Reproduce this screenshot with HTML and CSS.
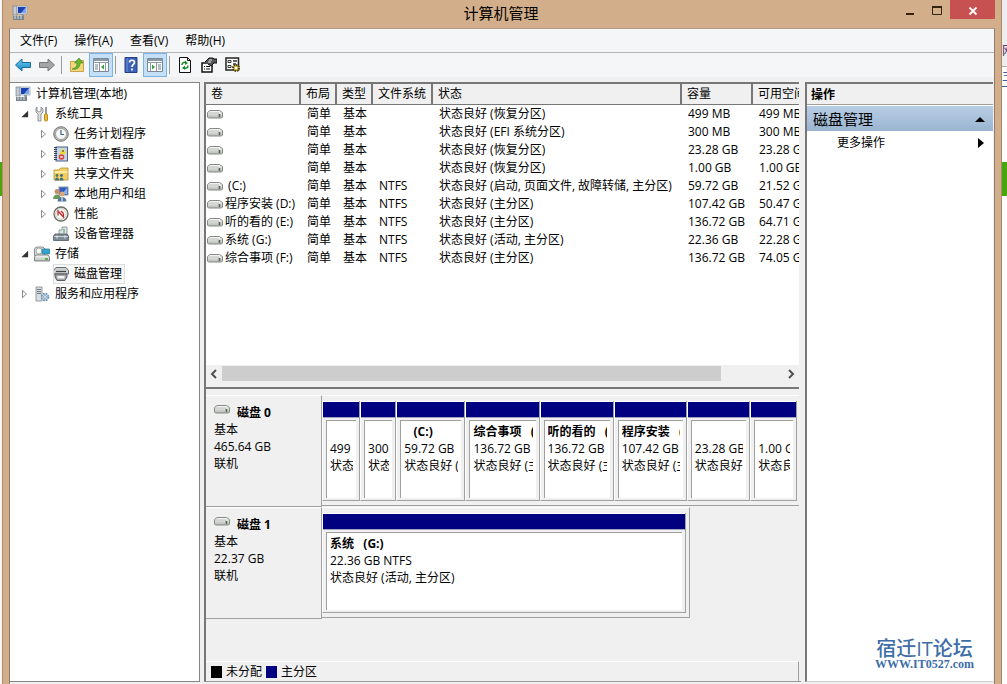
FILE: index.html
```html
<!DOCTYPE html>
<html lang="zh-CN">
    <head>
        <meta charset="UTF-8" />
        <meta name="viewport" content="width=device-width" />
        <title>计算机管理</title>
        <link rel="stylesheet" href="styles.css">
    </head>
    <body>
        <!-- Shared icons -->
        <svg class="defs" aria-hidden="true">
            <defs>
                <linearGradient id="g-blue" x1="0" y1="0" x2="0" y2="1">
                    <stop offset="0" stop-color="#6fd0f2" />
                    <stop offset="1" stop-color="#1583c0" />
                </linearGradient>
                <linearGradient id="g-grey" x1="0" y1="0" x2="0" y2="1">
                    <stop offset="0" stop-color="#fbfbfb" />
                    <stop offset="1" stop-color="#b4b8b4" />
                </linearGradient>
                <symbol id="i-computer" viewBox="0 0 16 16">
                    <rect x="1" y="1" width="4" height="9" fill="#c3cad0" stroke="#7b858d" stroke-width=".7" />
                    <rect x="5" y="1" width="10" height="8" fill="#e4e8ec" stroke="#8b98a5" stroke-width=".7" />
                    <rect x="6" y="2" width="8" height="6" fill="#1c3fb4" />
                    <path d="M9 8 14 2v6z" fill="#7ea6ee" />
                    <path d="M9 9h3v2H9z" fill="#8c98a1" />
                    <path d="M1 11h11v4H1z" fill="#77848c" />
                    <path d="M2 11h9M2 13h9" stroke="#dde2e5" stroke-dasharray="2 1" />
                </symbol>
                <symbol id="i-drive" viewBox="0 0 16 10">
                    <path d="M3 1.500h9.500L15.500 3.500v4.500l-1 1H1.500l-1-1V3.500z" fill="url(#g-grey)" stroke="#858a85" />
                    <path d="M1.500 4h10v4" fill="none" stroke="#c3c7c3" />
                    <path d="M12.500 5v3" stroke="#51614c" stroke-width="1.500" />
                </symbol>
                <symbol id="i-tools" viewBox="0 0 16 16">
                    <path d="M3 1v4l2 1 2-1V1l2 2v3L7 8v7H4V8L2 6V2z" fill="#dde0e2" stroke="#7b7f83" stroke-width=".8" />
                    <path d="M12 1v7" stroke="#777" stroke-width="1.500" />
                    <rect x="10.500" y="8" width="3" height="7" rx="1" fill="#f1bd27" stroke="#a87b12" stroke-width=".8" />
                </symbol>
                <symbol id="i-clock" viewBox="0 0 16 16">
                    <circle cx="8" cy="8" r="7.300" fill="#b8b8b5" stroke="#767674" />
                    <circle cx="8" cy="8" r="5.500" fill="#f3f7fb" stroke="#8e8c7a" stroke-width=".7" />
                    <path d="M8 4v4.500h3" fill="none" stroke="#45617f" stroke-width="1.200" />
                </symbol>
                <symbol id="i-events" viewBox="0 0 16 16">
                    <rect x="3" y="1" width="11.500" height="14" fill="#c5d6ea" stroke="#49617f" />
                    <path d="M2.500 1v14" stroke="#38435b" stroke-width="3" stroke-dasharray="1 1" />
                    <path d="M10 2 13.500 8h-7z" fill="#f5d92d" />
                    <path d="M10 4v2" stroke="#333" />
                    <circle cx="8.500" cy="11" r="2.800" fill="#d8433c" />
                    <path d="M7.500 10l2 2m0-2-2 2" stroke="#fff" />
                </symbol>
                <symbol id="i-shared" viewBox="0 0 16 16">
                    <path d="M1 4h5l1.500-2H15v12H1z" fill="#f3cf62" stroke="#b68d27" stroke-width=".8" />
                    <path d="M1.500 5h13v2h-13z" fill="#fae9a3" />
                    <circle cx="4" cy="9.500" r="1.400" fill="#4a7f5a" />
                    <circle cx="8.500" cy="9.500" r="1.400" fill="#3c628c" />
                    <path d="M2 14.500c0-4 4-4 4 0zM6.500 14.500c0-4 4-4 4 0z" fill="#3e7286" />
                </symbol>
                <symbol id="i-users" viewBox="0 0 16 16">
                    <rect x="6" y="1" width="9" height="8" fill="#345bc0" stroke="#8b98a5" />
                    <path d="M9 8l5-6v6z" fill="#8eb0ec" />
                    <circle cx="4" cy="5.500" r="2.500" fill="#c78f68" />
                    <path d="M0 13c0-6 8-6 8 0z" fill="#69995d" />
                    <circle cx="9" cy="8" r="2.500" fill="#dca67b" />
                    <path d="M4.500 15.500c0-6 9-6 9 0z" fill="#52769f" />
                    <path d="M9 11v4" stroke="#fff" />
                </symbol>
                <symbol id="i-perf" viewBox="0 0 16 16">
                    <circle cx="8" cy="8" r="7" fill="#f8f8f6" stroke="#6c6c66" stroke-width="1.300" />
                    <circle cx="8" cy="8" r="5.300" fill="none" stroke="#c2c2ba" stroke-width=".8" />
                    <path d="M5 9.500V5l5.500 6V7.500M8 5l2.500 2.500" fill="none" stroke="#c22b2b" stroke-width="1.300" />
                </symbol>
                <symbol id="i-device" viewBox="0 0 16 16">
                    <path d="M6 8V4h3V1h5v7" fill="#dfe4e7" stroke="#7e8990" stroke-width=".8" />
                    <path d="M11 3v4" stroke="#51b65d" stroke-width="1.200" />
                    <path d="M2 8h12l1.500 2v4.500H.500V10z" fill="#7d8b95" stroke="#4c5963" stroke-width=".8" />
                    <path d="M1 10.500h14" stroke="#c9d0d5" />
                    <path d="M4 9.500v3m8-3v3" stroke="#eee" />
                </symbol>
                <symbol id="i-storage" viewBox="0 0 16 16">
                    <path d="M2 1h7l2 2v7H.500V3z" fill="#d6dad9" stroke="#7a807d" stroke-width=".8" />
                    <circle cx="5" cy="5" r="3" fill="#f5f6f6" stroke="#8a918e" stroke-width=".7" />
                    <rect x="8" y="3" width="8" height="5" rx="1" fill="#33a6d0" stroke="#2c7391" stroke-width=".7" />
                    <path d="M2 9h12l1.500 2v4H.500v-4z" fill="url(#g-grey)" stroke="#686e6a" stroke-width=".8" />
                    <path d="M11 13h3" stroke="#3e9f3a" stroke-width="1.500" />
                </symbol>
                <symbol id="i-disk" viewBox="0 0 16 16">
                    <path d="M3 1.500h10l2.500 3V8H.500V4.500z" fill="#c9cdcf" stroke="#5c6164" stroke-width=".9" />
                    <path d="M3 5.500h10" stroke="#444" stroke-width="1.200" />
                    <path d="M2 8h12v3l-2 3.500H4L2 11z" fill="#a0a4a7" stroke="#4e5356" stroke-width=".9" />
                    <path d="M4.500 10h7v2.500h-7z" fill="#f3f4f4" />
                </symbol>
                <symbol id="i-services" viewBox="0 0 16 16">
                    <path d="M2 1h6v14H2z" fill="#d9dee1" stroke="#7d878e" stroke-width=".8" />
                    <path d="M3 3.500h4m-4 2h4m-4 2h4" stroke="#6d7a83" />
                    <circle cx="11" cy="11" r="3.400" fill="#c6dcec" stroke="#6f95b4" stroke-width="1.800" stroke-dasharray="1.700 1" />
                    <circle cx="11" cy="11" r="1.400" fill="#fff" stroke="#6f95b4" stroke-width=".8" />
                </symbol>
            </defs>
        </svg>

        <div class="backdrop backdrop-left"><i class="green"></i></div>

        <div class="window">
            <header class="titlebar">
                <svg class="icon app-icon"><use href="#i-computer" /></svg>
                <h1>计算机管理</h1>
                <div class="controls">
                    <button class="control" aria-label="最小化"><svg width="12" height="12" viewBox="0 0 12 12"><path d="M2 9h8" stroke="#33240f" stroke-width="2" /></svg></button>
                    <button class="control" aria-label="最大化"><svg width="12" height="12" viewBox="0 0 12 12"><path d="M1.500 2h9v7.500h-9z" fill="none" stroke="#33240f" /><path d="M1 2h10" stroke="#33240f" stroke-width="2" /></svg></button>
                    <button class="control close" aria-label="关闭"><svg width="12" height="12" viewBox="0 0 12 12"><path d="M2.500 2.500l7 7m0-7-7 7" stroke="#fff" stroke-width="1.800" /></svg></button>
                </div>
            </header>

            <div class="client">
                <nav class="menubar">
                    <button>文件(F)</button>
                    <button>操作(A)</button>
                    <button>查看(V)</button>
                    <button>帮助(H)</button>
                </nav>

                <div class="toolbar">
                    <button aria-label="后退"><svg class="icon" viewBox="0 0 16 16"><path d="M.500 8 7 2v3.500h8.500v5H7V14z" fill="url(#g-blue)" stroke="#1a6c9e" /></svg></button>
                    <button aria-label="前进"><svg class="icon" viewBox="0 0 16 16"><path d="M15.500 8 9 2v3.500H.500v5H9V14z" fill="#a5a5a5" stroke="#777" /></svg></button>
                    <i class="sep"></i>
                    <button aria-label="向上"><svg class="icon" viewBox="0 0 16 16"><path d="M1.500 4.500h5l1-1h7v11h-13z" fill="#f4d77d" stroke="#c9a448" /><path d="M3 12c4-1 5-3 5-6H5.500L10 1l4 5h-3c0 5-3 7-8 6z" fill="#66b62f" stroke="#3d8420" stroke-width=".6" /></svg></button>
                    <button class="pressed" aria-label="显示/隐藏控制台树"><svg class="icon" viewBox="0 0 16 16"><path d="M.500 1.500h15v13H.500z" fill="#fff" stroke="#7a8794" /><path d="M1 3h14" stroke="#8c9aa8" stroke-width="2" /><path d="M1 5.500h14M6.500 6v8M12.500 6v8" stroke="#8c9aa8" /><path d="M2 8h3m-3 2h3m-3 2h3" stroke="#71808e" /><path d="M11 7.500v5L8 10z" fill="#36a336" /></svg></button>
                    <i class="sep"></i>
                    <button aria-label="帮助"><svg class="icon" viewBox="0 0 16 16"><path d="M2 .500h12v15H2z" fill="#3c62b7" stroke="#243f85" /><path d="M4 1v14" stroke="#7092d6" /><path d="M6.500 5.500c0-3 5-3 5 0 0 2-2.500 2-2.500 4.500M9 11.500v2" fill="none" stroke="#fff" stroke-width="1.700" /></svg></button>
                    <button class="pressed" aria-label="显示/隐藏操作窗格"><svg class="icon" viewBox="0 0 16 16"><path d="M.500 1.500h15v13H.500z" fill="#fff" stroke="#7a8794" /><path d="M1 3h14" stroke="#8c9aa8" stroke-width="2" /><path d="M1 5.500h14M3.500 6v8M9.500 6v8" stroke="#8c9aa8" /><path d="M11 8h3m-3 2h3m-3 2h3" stroke="#71808e" /><path d="M5 7.500v5L8 10z" fill="#36a336" /></svg></button>
                    <i class="sep"></i>
                    <button aria-label="刷新"><svg class="icon" viewBox="0 0 16 16"><path d="M2.500.500h8l3 3v12h-11z" fill="#fff" stroke="#111" /><path d="M10.500.500v3h3" fill="none" stroke="#111" /><path d="M5 8c0-3 3-3 4-2M11 8.500c0 3-3 3-4 2" fill="none" stroke="#188a2a" stroke-width="1.500" /><path d="M8 3.500 11 6 8 8zM8 8.500 5 11l3 2z" fill="#188a2a" /></svg></button>
                    <button aria-label="属性"><svg class="icon" viewBox="0 0 16 16"><path d="M1 6h10v9H1z" fill="#fff" stroke="#111" stroke-width="1.500" /><path d="M3 9.500h6m-6 2.500h6" stroke="#111" stroke-dasharray="1 1 4" /><path d="M4 5l4-4h4l1 1h3v4h-3l-3 3-3-2" fill="#555" stroke="#111" /><path d="M8 3h3M7 5h3" stroke="#eee" /></svg></button>
                    <button aria-label="设置"><svg class="icon" viewBox="0 0 16 16"><path d="M1 1h12.500v12H1z" fill="#fff" stroke="#222" stroke-width="1.500" /><path d="M3 3.500h3v2H3zM3 8.500h3v2H3z" fill="none" stroke="#333" /><path d="M8 4h4M8 7h3" stroke="#333" stroke-width="1.500" /><circle cx="11" cy="11" r="3" fill="#e5c54a" stroke="#4d3e08" stroke-width="2" stroke-dasharray="1.500 .8" /><circle cx="11" cy="11" r="1.200" fill="#fff" /></svg></button>
                </div>

                <main class="panes">
                    <section class="tree">
                        <ul>
                            <li class="l0"><svg class="icon"><use href="#i-computer" /></svg><span>计算机管理(本地)</span></li>
                            <li class="l1"><button class="caret open" aria-label="折叠"></button><svg class="icon"><use href="#i-tools" /></svg><span>系统工具</span></li>
                            <li class="l2"><button class="caret" aria-label="展开"></button><svg class="icon"><use href="#i-clock" /></svg><span>任务计划程序</span></li>
                            <li class="l2"><button class="caret" aria-label="展开"></button><svg class="icon"><use href="#i-events" /></svg><span>事件查看器</span></li>
                            <li class="l2"><button class="caret" aria-label="展开"></button><svg class="icon"><use href="#i-shared" /></svg><span>共享文件夹</span></li>
                            <li class="l2"><button class="caret" aria-label="展开"></button><svg class="icon"><use href="#i-users" /></svg><span>本地用户和组</span></li>
                            <li class="l2"><button class="caret" aria-label="展开"></button><svg class="icon"><use href="#i-perf" /></svg><span>性能</span></li>
                            <li class="l2 leaf"><svg class="icon"><use href="#i-device" /></svg><span>设备管理器</span></li>
                            <li class="l1"><button class="caret open" aria-label="折叠"></button><svg class="icon"><use href="#i-storage" /></svg><span>存储</span></li>
                            <li class="l2 leaf"><div class="selected"><svg class="icon"><use href="#i-disk" /></svg><span>磁盘管理</span></div></li>
                            <li class="l1"><button class="caret" aria-label="展开"></button><svg class="icon"><use href="#i-services" /></svg><span>服务和应用程序</span></li>
                        </ul>
                    </section>

                    <section class="center">
                        <div class="volumes">
                            <div class="list">
                                <table>
                                    <colgroup>
                                        <col class="c-name"><col class="c-short"><col class="c-short"><col class="c-fs"><col class="c-status"><col class="c-size"><col class="c-free">
                                    </colgroup>
                                    <thead>
                                        <tr><th>卷</th><th>布局</th><th>类型</th><th>文件系统</th><th>状态</th><th>容量</th><th>可用空间</th></tr>
                                    </thead>
                                    <tbody>
                                        <tr><td><svg class="drive"><use href="#i-drive" /></svg></td><td>简单</td><td>基本</td><td></td><td>状态良好 (恢复分区)</td><td>499 MB</td><td>499 MB</td></tr>
                                        <tr><td><svg class="drive"><use href="#i-drive" /></svg></td><td>简单</td><td>基本</td><td></td><td>状态良好 (EFI 系统分区)</td><td>300 MB</td><td>300 MB</td></tr>
                                        <tr><td><svg class="drive"><use href="#i-drive" /></svg></td><td>简单</td><td>基本</td><td></td><td>状态良好 (恢复分区)</td><td>23.28 GB</td><td>23.28 GB</td></tr>
                                        <tr><td><svg class="drive"><use href="#i-drive" /></svg></td><td>简单</td><td>基本</td><td></td><td>状态良好 (恢复分区)</td><td>1.00 GB</td><td>1.00 GB</td></tr>
                                        <tr><td><svg class="drive"><use href="#i-drive" /></svg>&nbsp;(C:)</td><td>简单</td><td>基本</td><td>NTFS</td><td>状态良好 (启动, 页面文件, 故障转储, 主分区)</td><td>59.72 GB</td><td>21.52 GB</td></tr>
                                        <tr><td><svg class="drive"><use href="#i-drive" /></svg>程序安装 (D:)</td><td>简单</td><td>基本</td><td>NTFS</td><td>状态良好 (主分区)</td><td>107.42 GB</td><td>50.47 GB</td></tr>
                                        <tr><td><svg class="drive"><use href="#i-drive" /></svg>听的看的 (E:)</td><td>简单</td><td>基本</td><td>NTFS</td><td>状态良好 (主分区)</td><td>136.72 GB</td><td>64.71 GB</td></tr>
                                        <tr><td><svg class="drive"><use href="#i-drive" /></svg>系统 (G:)</td><td>简单</td><td>基本</td><td>NTFS</td><td>状态良好 (活动, 主分区)</td><td>22.36 GB</td><td>22.28 GB</td></tr>
                                        <tr><td><svg class="drive"><use href="#i-drive" /></svg>综合事项 (F:)</td><td>简单</td><td>基本</td><td>NTFS</td><td>状态良好 (主分区)</td><td>136.72 GB</td><td>74.05 GB</td></tr>
                                    </tbody>
                                </table>
                            </div>
                            <div class="scrollbar">
                                <button aria-label="向左滚动"><svg width="8" height="10" viewBox="0 0 8 10"><path d="M6 1 2 5l4 4" fill="none" stroke="#505050" stroke-width="2" /></svg></button>
                                <div class="track"><div class="thumb"></div></div>
                                <button aria-label="向右滚动"><svg width="8" height="10" viewBox="0 0 8 10"><path d="M2 1l4 4-4 4" fill="none" stroke="#505050" stroke-width="2" /></svg></button>
                            </div>
                        </div>

                        <div class="disks">
                            <div class="disk">
                                <div class="disk-label">
                                    <h2><svg class="drive"><use href="#i-drive" /></svg>磁盘 0</h2>
                                    <p>基本</p>
                                    <p>465.64 GB</p>
                                    <p>联机</p>
                                </div>
                                <div class="partitions">
                                    <div class="partition" style="flex-grow: 37"><div class="bar"></div><div class="cell"><h3></h3><p>499 MB</p><p>状态良好 (恢复分区)</p></div></div>
                                    <div class="partition" style="flex-grow: 35"><div class="bar"></div><div class="cell"><h3></h3><p>300 MB</p><p>状态良好 (EFI 系统分区)</p></div></div>
                                    <div class="partition" style="flex-grow: 69"><div class="bar"></div><div class="cell"><h3>   (C:)</h3><p>59.72 GB NTFS</p><p>状态良好 (启动, 页面文件, 故障转储, 主分区)</p></div></div>
                                    <div class="partition" style="flex-grow: 74"><div class="bar"></div><div class="cell"><h3>综合事项   (F:)</h3><p>136.72 GB NTFS</p><p>状态良好 (主分区)</p></div></div>
                                    <div class="partition" style="flex-grow: 74"><div class="bar"></div><div class="cell"><h3>听的看的   (E:)</h3><p>136.72 GB NTFS</p><p>状态良好 (主分区)</p></div></div>
                                    <div class="partition" style="flex-grow: 73"><div class="bar"></div><div class="cell"><h3>程序安装   (D:)</h3><p>107.42 GB NTFS</p><p>状态良好 (主分区)</p></div></div>
                                    <div class="partition" style="flex-grow: 63"><div class="bar"></div><div class="cell"><h3></h3><p>23.28 GB</p><p>状态良好 (恢复分区)</p></div></div>
                                    <div class="partition" style="flex-grow: 46"><div class="bar"></div><div class="cell"><h3></h3><p>1.00 GB</p><p>状态良好 (恢复分区)</p></div></div>
                                </div>
                            </div>

                            <div class="disk">
                                <div class="disk-label">
                                    <h2><svg class="drive"><use href="#i-drive" /></svg>磁盘 1</h2>
                                    <p>基本</p>
                                    <p>22.37 GB</p>
                                    <p>联机</p>
                                </div>
                                <div class="partitions small">
                                    <div class="partition" style="flex-grow: 1"><div class="bar"></div><div class="cell"><h3>系统   (G:)</h3><p>22.36 GB NTFS</p><p>状态良好 (活动, 主分区)</p></div></div>
                                </div>
                            </div>
                        </div>

                        <footer class="legend">
                            <i class="swatch black"></i><span>未分配</span>
                            <i class="swatch navy"></i><span>主分区</span>
                        </footer>
                    </section>

                    <aside class="actions">
                        <h2>操作</h2>
                        <button class="group"><span>磁盘管理</span><svg width="10" height="6" viewBox="0 0 10 6"><path d="M0 6 5 1l5 5z" /></svg></button>
                        <button class="more"><span>更多操作</span><svg width="6" height="10" viewBox="0 0 6 10"><path d="M0 0l6 5-6 5z" /></svg></button>
                        <div class="brand">
                            <strong>宿迁IT论坛</strong>
                            <span>WWW.IT0527.com</span>
                        </div>
                    </aside>
                </main>
            </div>
        </div>

        <div class="backdrop backdrop-right"><span class="tab">网</span><span class="link">主</span><i class="green"></i></div>
    </body>
</html>
```

FILE: styles.css
```css
* {
    box-sizing: border-box;
}

body {
    margin: 0;
    height: 100vh;
    display: grid;
    grid-template-columns: 2px minmax(0, 1fr) 5px;
    overflow: hidden;
    background-color: white;
    color: #000000;
    font: 12px/18px "Open Sans", "Noto Sans CJK SC", sans-serif;
}

h1, h2, h3, p, ul {
    margin: 0;
    padding: 0;
    font-size: 12px;
}

button {
    padding: 0;
    border: none;
    background: none;
    color: inherit;
    font: inherit;
}

.defs {
    position: absolute;
    width: 0;
    height: 0;
}

.icon {
    flex: none;
    width: 16px;
    height: 16px;
}

.drive {
    flex: none;
    width: 16px;
    height: 10px;
}

/* Page showing behind the window */
.backdrop {
    display: flex;
    flex-direction: column;
    overflow: hidden;
    background-color: #f6f6f6;
}

.backdrop .green {
    height: 34px;
    background-color: #46a60c;
}

.backdrop-left .green {
    margin-top: 162px;
}

.backdrop-right {
    background-color: white;
}

.backdrop-right .tab {
    height: 67px;
    padding-top: 42px;
    background-color: #eeeef0;
    border-bottom: 1px solid #aaaaaa;
    color: #57306f;
}

.backdrop-right .link {
    height: 20px;
    border-bottom: 1px solid #3a5f9a;
    color: #3a5f9a;
}

.backdrop-right .green {
    margin-top: 75px;
}

/* Window frame */
.window {
    display: flex;
    flex-direction: column;
    min-width: 0;
    padding: 0 6px;
    background-color: #d3ae8a;
    border-right: 1px solid #a98868;
    border-left: 1px solid #b08e6c;
}

.titlebar {
    flex: none;
    display: grid;
    grid-template-columns: 128px 1fr 130px;
    height: 28px;
}

.app-icon {
    margin: 5px 0 0 3px;
}

.titlebar h1 {
    font-size: 15px;
    font-weight: normal;
    line-height: 27px;
    text-align: center;
}

.controls {
    display: flex;
    justify-content: flex-end;
}

.control {
    width: 27px;
    height: 19px;
}

.control svg {
    display: block;
    margin: 3px auto 0;
}

.close {
    width: 45px;
    background-color: #c75050;
}

.client {
    flex: 1;
    display: flex;
    flex-direction: column;
    min-height: 0;
    background-color: #f0f0f0;
    border: 1px solid #8f7c6c;
    border-top-color: #b39a84;
    border-bottom: none;
}

.menubar {
    flex: none;
    display: flex;
    gap: 17px;
    height: 24px;
    padding-left: 10px;
    background-color: #f5f6f7;
    border-bottom: 1px solid #b4b4b4;
}

.toolbar {
    flex: none;
    display: flex;
    align-items: center;
    height: 24px;
    padding-left: 1px;
    background-color: #f5f6f7;
}

.toolbar button {
    width: 24px;
    height: 24px;
    border: 1px solid transparent;
}

.toolbar .icon {
    display: block;
    margin: auto;
}

.toolbar .pressed {
    background-color: #c4e0f8;
    border-color: #7cb4e6;
}

.sep {
    width: 1px;
    height: 18px;
    margin: 0 3px 0 2px;
    background-color: #9a9a9a;
}

.panes {
    flex: 1;
    display: grid;
    grid-template-columns: 190px minmax(0, 1fr) 188px;
    gap: 4px;
    min-height: 0;
    padding: 5px 1px 2px 0;
}

/* Console tree */
.tree {
    padding-top: 1px;
    background-color: white;
    border: 1px solid #858585;
    border-left: none;
}

.tree li {
    display: flex;
    align-items: center;
    gap: 5px;
    height: 20px;
}

.tree .l0 {
    padding-left: 5px;
}

.tree .l1 {
    padding-left: 10px;
}

.tree .l2 {
    padding-left: 29px;
}

.tree .leaf {
    padding-left: 43px;
}

.caret {
    flex: none;
    width: 9px;
    height: 9px;
    background-color: #8b8b8b;
    clip-path: path(evenodd, "M2 0 7 4.500 2 9zM3 2v5l3-2.500z");
}

.caret.open {
    background-color: #333333;
    clip-path: polygon(90% 15%, 90% 85%, 15% 85%);
}

.selected {
    display: flex;
    align-items: center;
    gap: 5px;
    height: 20px;
    padding-right: 3px;
    background-color: #f7f7f7;
    outline: 1px solid #dedede;
    outline-offset: -1px;
}

/* Volume list */
.center {
    display: flex;
    flex-direction: column;
    min-height: 0;
    padding-right: 2px;
    border-left: 2px solid #777777;
    border-bottom: 1px solid #999999;
}

.volumes {
    flex: none;
    display: flex;
    flex-direction: column;
    height: 307px;
    padding-bottom: 5px;
    border-top: 2px solid #777777;
    border-bottom: 2px solid #777777;
}

.list {
    flex: 1;
    overflow: hidden;
    background-color: white;
}

table {
    width: 627px;
    table-layout: fixed;
    border-collapse: separate;
    border-spacing: 0;
}

.c-name {
    width: 95px;
}

.c-short {
    width: 36px;
}

.c-fs {
    width: 60px;
}

.c-status {
    width: 249px;
}

.c-size {
    width: 71px;
}

.c-free {
    width: 80px;
}

th {
    height: 21px;
    padding: 0 0 0 5px;
    background-color: #f0f0f0;
    border-right: 2px solid #777777;
    border-bottom: 1px solid #777777;
    font-weight: normal;
    text-align: left;
    white-space: nowrap;
}

td {
    height: 18px;
    padding: 0 0 0 6px;
    line-height: 18px;
    white-space: nowrap;
}

td:first-child {
    padding-left: 1px;
}

td .drive {
    margin-right: 2px;
    vertical-align: -1px;
}

.scrollbar {
    flex: none;
    display: flex;
    height: 17px;
    padding: 1px 0;
    background-color: #f0f0f0;
}

.scrollbar button {
    width: 16px;
}

.scrollbar svg {
    display: block;
    margin: auto;
}

.track {
    flex: 1;
}

.thumb {
    width: 89%;
    height: 15px;
    background-color: #cdcdcd;
}

/* Graphical view */
.disks {
    flex: 1;
    padding-top: 6px;
    overflow: hidden;
}

.disk {
    display: flex;
    height: 112px;
}

.disk-label {
    flex: none;
    width: 116px;
    height: 112px;
    padding: 8px 8px 0;
    border-top: 1px solid #ffffff;
    border-right: 1px solid #a0a0a0;
    border-bottom: 1px solid #a0a0a0;
    line-height: 17px;
}

.disk-label h2 {
    display: flex;
    gap: 7px;
    line-height: 17px;
}

.partitions {
    flex: 1;
    display: flex;
    min-width: 0;
    height: 111px;
    padding: 5px 2px 4px 0;
    border-top: 1px solid #ffffff;
    border-bottom: 1px solid #a0a0a0;
}

.partitions.small {
    flex: 0 1 368px;
    padding-right: 3px;
    border-right: 1px solid #a0a0a0;
}

.partition {
    flex-basis: 0;
    display: flex;
    flex-direction: column;
    min-width: 0;
    border-right: 1px solid #a0a0a0;
    border-bottom: 1px solid #a0a0a0;
    border-left: 1px solid #ffffff;
}

.bar {
    height: 17px;
    background-color: #000080;
    border-top: 1px solid #ffffff;
    border-bottom: 1px solid #a0a0c0;
}

.cell {
    flex: 1;
    margin: 2px 3px;
    padding: 2px 3px 0;
    background-color: white;
    border-top: 1px solid #a0a0a0;
    border-left: 1px solid #a0a0a0;
}

.cell h3, .cell p {
    height: 17px;
    overflow: hidden;
    line-height: 17px;
    white-space: pre;
}

.legend {
    flex: none;
    display: flex;
    align-items: center;
    gap: 4px;
    height: 20px;
    padding-left: 5px;
    border-top: 1px solid #ffffff;
    border-right: 1px solid #a0a0a0;
}

.swatch {
    width: 11px;
    height: 12px;
}

.black {
    background-color: #000000;
}

.navy {
    background-color: #000080;
}

/* Actions pane */
.actions {
    display: flex;
    flex-direction: column;
    background-color: white;
    border-top: 2px solid #777777;
    border-left: 2px solid #777777;
    border-bottom: 1px solid #cccccc;
}

.actions h2 {
    height: 21px;
    padding-left: 4px;
    background-color: #f0f0f0;
    border-bottom: 1px solid #a0a0a0;
    line-height: 21px;
}

.group {
    display: flex;
    align-items: center;
    justify-content: space-between;
    height: 25px;
    margin-top: 1px;
    padding: 0 8px 0 6px;
    background: linear-gradient(#b9cee4, #99b4d1);
    font-size: 15px;
}

.more {
    display: flex;
    align-items: center;
    justify-content: space-between;
    height: 24px;
    padding: 0 9px 0 30px;
}

.brand {
    display: flex;
    flex-direction: column;
    align-self: flex-end;
    margin: auto 19px 11px 0;
    color: #3d6ea8;
    text-align: center;
}

.brand strong {
    font-size: 20px;
    font-weight: 500;
    line-height: 18px;
}

.brand span {
    font: bold 12px/12px "Liberation Serif", serif;
}
```
